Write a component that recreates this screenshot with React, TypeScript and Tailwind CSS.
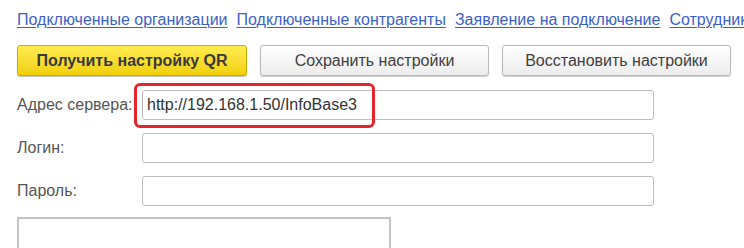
import React from 'react';

const links = [
  'Подключенные организации',
  'Подключенные контрагенты',
  'Заявление на подключение',
  'Сотрудники',
];

const fields = [
  { label: 'Адрес сервера:', value: 'http://192.168.1.50/InfoBase3' },
  { label: 'Логин:', value: '' },
  { label: 'Пароль:', value: '' },
];

const App: React.FC = () => {
  return (
    <div className="relative w-[744px] h-[248px] overflow-hidden bg-white pl-[17px] font-['Liberation_Sans',Arial,sans-serif]">
      {/* Links */}
      <div className="flex gap-[9px] pt-[10px] h-[45px] whitespace-nowrap text-[16px] leading-[19px] text-[#3d5fc8]">
        {links.map((l) => (
          <a key={l} href="#" className="underline underline-offset-2 decoration-1">
            {l}
          </a>
        ))}
      </div>

      {/* Buttons */}
      <div className="flex gap-[13px] h-[31px]">
        <button className="w-[230px] h-[31px] rounded-[3px] border border-[#c9ad00] bg-gradient-to-b from-[#ffec4d] to-[#f2d000] text-[16px] font-bold text-[#3a3a3a] shadow-[0_1px_1px_rgba(0,0,0,0.25)]">
          Получить настройку QR
        </button>
        <button className="w-[229px] h-[31px] rounded-[3px] border border-[#b8b8b8] bg-gradient-to-b from-[#ffffff] to-[#ececec] text-[16px] text-[#404040] shadow-[0_1px_1px_rgba(0,0,0,0.2)]">
          Сохранить настройки
        </button>
        <button className="w-[229px] h-[31px] rounded-[3px] border border-[#b8b8b8] bg-gradient-to-b from-[#ffffff] to-[#ececec] text-[16px] text-[#404040] shadow-[0_1px_1px_rgba(0,0,0,0.2)]">
          Восстановить настройки
        </button>
      </div>

      {/* Form */}
      <div className="flex flex-col gap-[13px] pt-[14px]">
        {fields.map((f) => (
          <div key={f.label} className="flex items-center h-[30px]">
            <div className="w-[125px] shrink-0 text-[16px] text-[#555555] whitespace-nowrap">{f.label}</div>
            <div className="w-[512px] h-[30px] rounded-[3px] border border-[#bdbdbd] bg-white flex items-center pl-[4px] text-[16px] text-[#333333]">
              {f.value}
            </div>
          </div>
        ))}
      </div>

      <div className="mt-[11px] w-[374px] h-[60px] border-2 border-[#c4c4c4] bg-white" />

      {/* Annotation highlight */}
      <div className="absolute left-[134px] top-[83px] w-[241px] h-[45px] rounded-[6px] border-[3px] border-[#e3262b] pointer-events-none" />
    </div>
  );
};

export default App;
